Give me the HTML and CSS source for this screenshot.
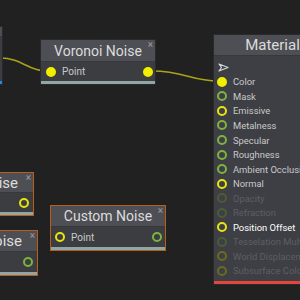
FILE: index.html
```html
<!DOCTYPE html>
<html>
<head>
<meta charset="utf-8">
<link rel="stylesheet" href="styles.css">
</head>
<body>
<div class="canvas">
  <svg class="wires" width="300" height="300" viewBox="0 0 300 300">
    <path d="M0 58 C 22 58, 28 71, 46 71" />
    <path d="M152 71 C 185 71, 190 81, 219 81" />
  </svg>

  <div class="node node-a">
    <div class="head"></div>
    <div class="body"></div>
    <div class="foot foot-blue"></div>
  </div>

  <div class="node node-voronoi">
    <div class="head">Voronoi Noise<span class="close">×</span></div>
    <div class="body">
      <span class="port"><i class="dot dot-yellow fill"></i>Point</span>
      <i class="dot dot-yellow fill"></i>
    </div>
    <div class="foot"></div>
  </div>

  <div class="node sel node-b">
    <div class="head head-right">ise<span class="close">×</span></div>
    <div class="body body-right"><i class="dot dot-yellow"></i></div>
    <div class="foot"></div>
  </div>

  <div class="node sel node-c">
    <div class="head head-right">oise<span class="close">×</span></div>
    <div class="body body-right"><i class="dot dot-green"></i></div>
    <div class="foot"></div>
  </div>

  <div class="node sel node-custom">
    <div class="head">Custom Noise<span class="close">×</span></div>
    <div class="body">
      <span class="port"><i class="dot dot-yellow"></i>Point</span>
      <i class="dot dot-green"></i>
    </div>
    <div class="foot"></div>
  </div>

  <div class="node node-material">
    <div class="head">Material</div>
    <div class="rows">
      <div class="row"><svg class="tri" width="11" height="9" viewBox="0 0 11 9"><path d="M1 1 L10 4.5 L1 8 L3.5 4.5 Z" /></svg></div>
      <div class="row"><i class="dot dot-yellow fill"></i>Color</div>
      <div class="row"><i class="dot dot-green"></i>Mask</div>
      <div class="row"><i class="dot dot-yellow"></i>Emissive</div>
      <div class="row"><i class="dot dot-green"></i>Metalness</div>
      <div class="row"><i class="dot dot-green"></i>Specular</div>
      <div class="row"><i class="dot dot-green"></i>Roughness</div>
      <div class="row"><i class="dot dot-green"></i>Ambient Occlusion</div>
      <div class="row"><i class="dot dot-yellow"></i>Normal</div>
      <div class="row off"><i class="dot dot-green"></i>Opacity</div>
      <div class="row off"><i class="dot dot-green"></i>Refraction</div>
      <div class="row strong"><i class="dot dot-yellow"></i>Position Offset</div>
      <div class="row off"><i class="dot dot-green"></i>Tesselation Multiplier</div>
      <div class="row off"><i class="dot dot-yellow"></i>World Displacement</div>
      <div class="row off"><i class="dot dot-yellow"></i>Subsurface Color</div>
    </div>
    <div class="foot foot-red"></div>
  </div>
</div>
</body>
</html>
```
FILE: styles.css
```css
html, body {
  margin: 0;
  padding: 0;
}
body {
  background: #202020;
  font-family: Roboto, "Liberation Sans", sans-serif;
  overflow: hidden;
}
.canvas {
  position: relative;
  width: 300px;
  height: 300px;
  overflow: hidden;
  background: #212121;
}
.wires {
  position: absolute;
  left: 0;
  top: 0;
}
.wires path {
  fill: none;
  stroke: #a9a41c;
  stroke-width: 1.5;
}
.node {
  position: absolute;
  background: #3c3d41;
  border: 1px solid #2a2a2c;
  display: flex;
  flex-direction: column;
}
.node.sel {
  border-color: #b85e1c;
}
.head {
  position: relative;
  background: #4e4f55;
  color: #dcdcdc;
  font-size: 14px;
  display: flex;
  align-items: center;
  justify-content: center;
  border-bottom: 1px solid #37383b;
  box-sizing: border-box;
}
.head-right {
  justify-content: flex-end;
  padding-right: 15px;
}
.close {
  position: absolute;
  right: 2px;
  top: 0px;
  font-size: 10px;
  line-height: 10px;
  color: #9a9a9e;
}
.body {
  display: flex;
  align-items: center;
  justify-content: space-between;
  padding: 0 3px 0 4px;
  font-size: 10px;
  color: #c9c9c9;
  flex: 1;
}
.body-right {
  justify-content: flex-end;
  padding-right: 4px;
}
.port {
  display: flex;
  align-items: center;
  gap: 6px;
}
.foot {
  height: 3px;
  background: #93a6a6;
}
.foot-blue { background: #1e88e5; }
.foot-red { background: #e2463a; }

.dot {
  display: block;
  width: 10px;
  height: 10px;
  border-radius: 50%;
  box-sizing: border-box;
  border: 2px solid;
  flex: none;
}
.dot-yellow { border-color: #e8e410; }
.dot-green { border-color: #7cb342; }
.dot.fill { background: #f2ee00; border-color: #f2ee00; }

.node-a {
  left: -60px;
  top: 26px;
  width: 61px;
  height: 57px;
}
.node-a .head { height: 10px; }

.node-voronoi {
  left: 40px;
  top: 39px;
  width: 114px;
  height: 44px;
}
.node-voronoi .head { height: 22px; }
.node-voronoi .body { padding: 0 2px 0 5px; }

.node-b {
  left: -60px;
  top: 172px;
  width: 92px;
  height: 42px;
}
.node-b .head { height: 20px; font-size: 15px; }

.node-c {
  left: -60px;
  top: 230px;
  width: 96px;
  height: 44px;
}
.node-c .head { height: 21px; font-size: 15px; }

.node-custom {
  left: 50px;
  top: 205px;
  width: 114px;
  height: 44px;
}
.node-custom .head { height: 21px; }

.node-material {
  left: 213px;
  top: 34px;
  width: 117px;
}
.node-material .head {
  height: 21px;
  font-size: 15px;
}
.rows {
  padding: 4px 0 3px 3px;
  background: #3e3f44;
}
.row {
  height: 14.56px;
  display: flex;
  align-items: center;
  gap: 6px;
  font-size: 9.4px;
  color: #c9c9c9;
  white-space: nowrap;
}
.row.off { color: #5d5e63; }
.row.off .dot-green { border-color: #4c5c38; }
.row.off .dot-yellow { border-color: #6b6a22; }
.row.strong { color: #ffffff; }
.tri {
  display: block;
  margin-left: 1px;
}
.tri path {
  fill: none;
  stroke: #d8d8d8;
  stroke-width: 1.2;
  stroke-linejoin: round;
}
```
